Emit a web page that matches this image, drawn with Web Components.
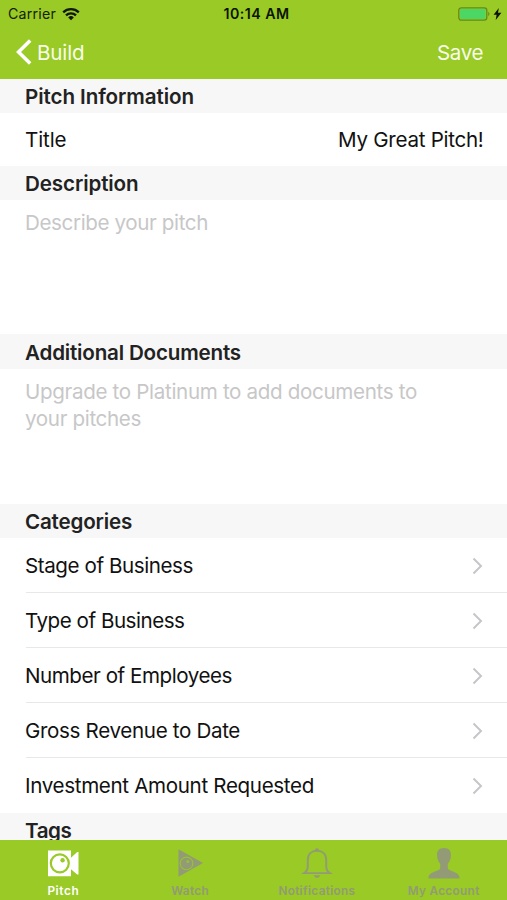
<!DOCTYPE html>
<html lang="en">
<head>
<meta charset="utf-8">
<title>Pitch</title>
<style>
html,body{margin:0;height:100%;overflow:hidden;background:#fff}
body{font-family:Inter,"Liberation Sans",sans-serif;font-size:20.6px;color:#111}
</style>
</head>
<body>
<pitch-app></pitch-app>
<script>
const define = (name, html, extra) => customElements.define(name, class extends HTMLElement {
  connectedCallback() {
    if (this.shadowRoot) return;
    this.attachShadow({mode: 'open'}).innerHTML = html;
    if (extra) extra(this, this.shadowRoot);
  }
});

// A label whose tracking is adjusted so that its line is `w` pixels wide.
define('fit-label', `<style>:host{display:inline-block;white-space:nowrap;flex:none}span{display:inline-block}</style><span><slot></slot></span>`,
  (el, root) => {
    const s = root.querySelector('span'), w = +el.getAttribute('w');
    const n = el.textContent.length;
    s.style.letterSpacing = (w - s.getBoundingClientRect().width) / n + 'px';
  });

define('status-bar', `<style>
:host{display:grid;grid-template-columns:1fr auto 1fr;align-items:center;height:27px;padding:0 5px 0 8px;color:#15200a;font-size:14.2px;box-sizing:border-box}
.l{display:flex;align-items:center;gap:6px}.r{display:flex;justify-content:flex-end;align-items:center;gap:3px}
b{font-weight:600;color:#0c1400;padding-left:3px}svg{display:block}
</style>
<div class="l"><fit-label w="48">Carrier</fit-label>
<svg width="18" height="14" viewBox="0 0 18 14"><g fill="none" stroke="#10180a" stroke-width="2.3"><path d="M1.2 5.3a11.2 11.2 0 0 1 15.6 0"/><path d="M4 8.3a7.2 7.2 0 0 1 10 0"/></g><path d="M9 13.2l-2.8-2.8a4 4 0 0 1 5.6 0z" fill="#10180a"/></svg></div>
<b><fit-label w="66">10:14 AM</fit-label></b>
<div class="r"><svg width="32" height="14" viewBox="0 0 32 14"><rect x=".8" y=".8" width="28" height="12.4" rx="2.6" fill="none" stroke="#648a19" stroke-width="1.3"/><rect x="2.1" y="2.1" width="25.4" height="9.800" rx="1" fill="#4cd764"/><path d="M30.200 4.800q2.600 2.200 0 4.400z" fill="#648a19"/></svg>
<svg width="9" height="12" viewBox="0 0 8 12"><path d="M5.300.1L.1 6.800h3L2.200 11.900 7.900 4.800H4.500z" fill="#0c1400"/></svg></div>`);

define('nav-bar', `<style>
:host{display:flex;justify-content:space-between;align-items:center;height:52px;padding:0 24px 2px 16px;color:#f8fcea;box-sizing:border-box}
.b{display:flex;align-items:center;gap:5px}svg{display:block}
</style><div class="b"><svg width="16" height="26" viewBox="0 0 16 26"><path d="M14.2 1.5L2.5 13l11.700 11.500" fill="none" stroke="#fff" stroke-width="3.600"/></svg><fit-label w="47.500">Build</fit-label></div><fit-label w="46">Save</fit-label>`);

define('section-header', `<style>:host{display:flex;align-items:center;height:34px;padding:1px 24px 0 25px;background:#f7f7f7;font-weight:600;color:#222;box-sizing:border-box;flex:none}</style><slot></slot>`);

define('value-row', `<style>:host{display:flex;justify-content:space-between;align-items:center;height:53px;padding:0 23.5px 0 25px;box-sizing:border-box}</style><slot></slot>`);

define('text-field', `<style>:host{display:flex;flex-direction:column;align-items:flex-start;height:134px;padding:9px 24px 0 25px;line-height:27px;color:#c7c7c8;box-sizing:border-box}</style><slot></slot>`);

define('link-row', `<style>
:host{display:flex;padding-left:26px;height:55px;box-sizing:border-box}
.i{flex:1;display:flex;align-items:center;justify-content:space-between;padding:1px 24px 0 0;border-bottom:1px solid #e8e8e8}
:host([last]) .i{border-color:transparent}
.t{margin-left:-1px}svg{display:block}
</style><div class="i"><div class="t"><slot></slot></div><svg width="11" height="18" viewBox="0 0 11 18"><path d="M1.500 1.500L9 9l-7.500 7.500" fill="none" stroke="#c6c6ca" stroke-width="2"/></svg></div>`);

define('tab-item', `<style>
:host{flex:1;display:flex;flex-direction:column;align-items:center;justify-content:space-between;height:60px;padding:7px 0 1px;box-sizing:border-box;color:#929b75;font-size:11.800px;font-weight:600;line-height:15px}
:host([active]){color:#fff}
::slotted(svg){display:block}
</style><slot name="icon"></slot><slot></slot>`);

define('pitch-app', `<style>
:host{display:flex;flex-direction:column;height:900px;width:507px}
header,nav{background:#99ca26;flex:none}
main{flex:1;overflow:hidden;min-height:0}
nav{display:flex;height:60px}
</style>
<header><status-bar></status-bar><nav-bar></nav-bar></header>
<main>
<section-header><fit-label w="169">Pitch Information</fit-label></section-header>
<value-row><fit-label w="41.500">Title</fit-label><fit-label w="145.500">My Great Pitch!</fit-label></value-row>
<section-header><fit-label w="113.500">Description</fit-label></section-header>
<text-field><fit-label w="183">Describe your pitch</fit-label></text-field>
<section-header style="height:35px"><fit-label w="216">Additional Documents</fit-label></section-header>
<text-field style="height:135px"><fit-label w="392">Upgrade to Platinum to add documents to</fit-label><fit-label w="116">your pitches</fit-label></text-field>
<section-header><fit-label w="107">Categories</fit-label></section-header>
<link-row><fit-label w="168">Stage of Business</fit-label></link-row>
<link-row><fit-label w="159.500">Type of Business</fit-label></link-row>
<link-row><fit-label w="207">Number of Employees</fit-label></link-row>
<link-row><fit-label w="215">Gross Revenue to Date</fit-label></link-row>
<link-row last><fit-label w="289">Investment Amount Requested</fit-label></link-row>
<section-header><fit-label w="46.500">Tags</fit-label></section-header>
</main>
<nav>
<tab-item active><svg slot="icon" width="32" height="32" viewBox="0 0 32 32"><path d="M1 3.500h23v7.200l6.200-5.600h1.300v22.300h-1.300L24 22.200v7H1z" fill="#fff"/><circle cx="12.800" cy="16.300" r="9" fill="none" stroke="#99ca26" stroke-width="2.200"/><circle cx="15.600" cy="13.300" r="2.200" fill="#99ca26"/></svg><fit-label w="32">Pitch</fit-label></tab-item>
<tab-item><svg slot="icon" width="32" height="32" viewBox="0 0 32 32"><path d="M4.500 2.300L29 16 4.500 29.700z" fill="#929b75"/><circle cx="12.500" cy="16.400" r="6.300" fill="none" stroke="#99ca26" stroke-width="1.100" opacity=".8"/><circle cx="13.800" cy="14.600" r="1.500" fill="#99ca26" opacity=".8"/></svg><fit-label w="38">Watch</fit-label></tab-item>
<tab-item><svg slot="icon" width="32" height="32" viewBox="0 0 32 32"><path d="M3.200 26.100c2.500-1.500 3.600-3.200 3.600-7V13c0-6 3.600-9.300 9.200-9.300s9.200 3.300 9.200 9.300v6.100c0 3.800 1.100 5.500 3.600 7z" fill="none" stroke="#929b75" stroke-width="1.900"/><path d="M13.800 3.500a2.200 2.200 0 1 1 4.400 0zM12.800 28.300h6.400q-.6 2.700-3.200 2.700t-3.200-2.700z" fill="#929b75"/></svg><fit-label w="77">Notifications</fit-label></tab-item>
<tab-item><svg slot="icon" width="32" height="32" viewBox="0 0 32 32"><path d="M16 1c4.800 0 7.200 2.800 7 7.300-.2 4-1.500 6.700-3.200 8.500v4.100c0 3.500 11.700 3.200 11.700 9.600v1.100H.5v-1.100c0-6.400 11.700-6.100 11.700-9.600v-4.100C10.500 15 9.200 12.300 9 8.300 8.800 3.800 11.200 1 16 1z" fill="#929b75"/></svg><fit-label w="72">My Account</fit-label></tab-item>
</nav>`);
</script>
</body>
</html>
